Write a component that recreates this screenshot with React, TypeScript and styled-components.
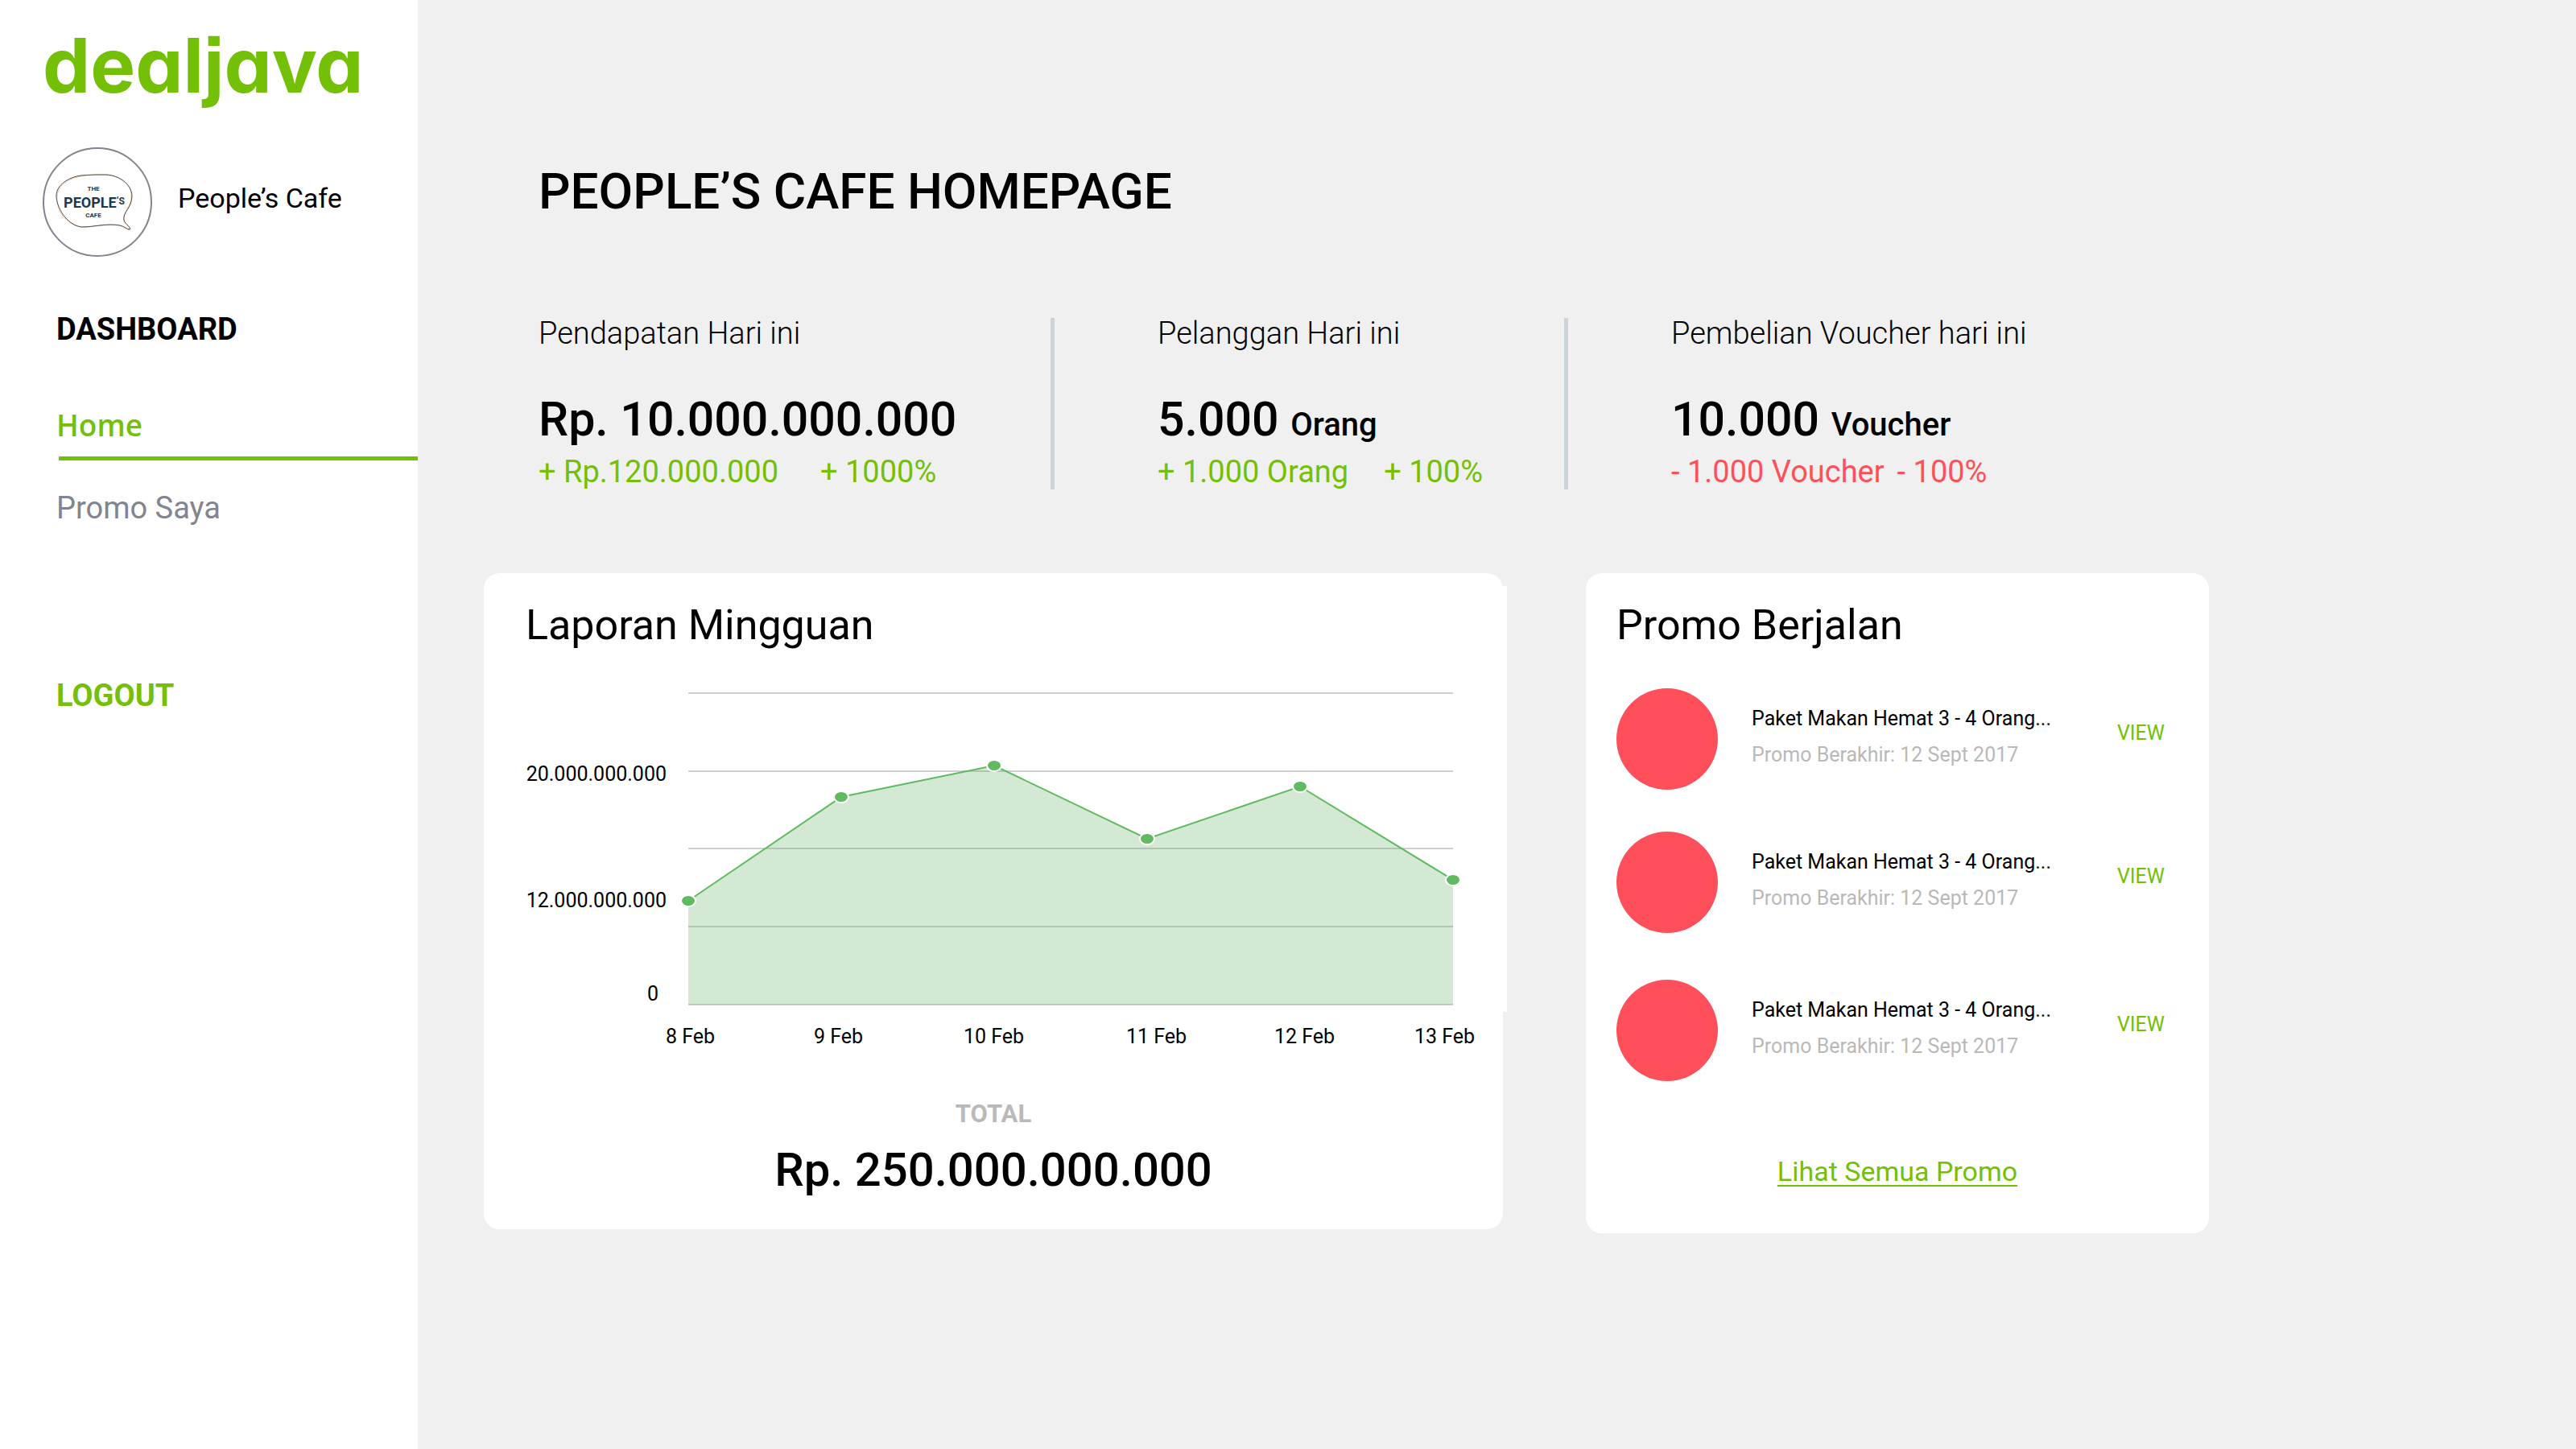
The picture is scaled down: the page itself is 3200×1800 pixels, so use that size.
import React from "react";
import styled, { createGlobalStyle } from "styled-components";

const color = {
  green: "#74c007",
  red: "#ff4f5a",
  ink: "#000000",
  slate: "#82858f",
  muted: "#b9b9b9",
  divider: "#cdd3dc",
  canvas: "#f0f0f0",
};

const GlobalStyle = createGlobalStyle`
  *, *::before, *::after { box-sizing: border-box; }
  body {
    margin: 0;
    background: ${color.canvas};
    color: ${color.ink};
    font-family: Roboto, "Liberation Sans", sans-serif;
  }
  h1, h2, p, ul, ol { margin: 0; padding: 0; font-weight: 400; }
  ul, ol { list-style: none; }
  a { color: inherit; text-decoration: none; }
  button { padding: 0; border: 0; background: none; font: inherit; color: inherit; cursor: pointer; }
`;

const Page = styled.div`
  display: flex;
  min-height: 100vh;
`;

/* Sidebar */

const Sidebar = styled.aside`
  flex: 0 0 519px;
  background: #fff;
  padding-top: 33px;
`;

const Wordmark = styled.a`
  display: block;
  padding-left: 53px;
  font-family: Inter, "Open Sans", sans-serif;
  font-weight: 700;
  font-size: 94px;
  line-height: 96px;
  font-feature-settings: "cv11" 1, "ss07" 1;
  color: ${color.green};
`;

const Merchant = styled.div`
  display: flex;
  align-items: center;
  gap: 32px;
  margin: 54px 0 70px;
  padding-left: 53px;
`;

const Avatar = styled.svg`
  display: block;
  width: 136px;
  height: 136px;
`;

const MerchantName = styled.p`
  padding-bottom: 10px;
  font-size: 34px;
  line-height: 40px;
`;

const Menu = styled.nav`
  display: flex;
  flex-direction: column;
  align-items: stretch;
  padding-left: 70px;
  font-size: 38px;
  line-height: 40px;
`;

const MenuTitle = styled.h2`
  margin-bottom: 79px;
  font-size: 38px;
  font-weight: 700;
`;

const MenuList = styled.ul`
  display: flex;
  flex-direction: column;
  gap: 39px;
  margin-bottom: 193px;
`;

const MenuLink = styled.a<{ $active?: boolean }>`
  display: block;
  color: ${(p) => (p.$active ? color.green : color.slate)};
  ${(p) =>
    p.$active &&
    `
    font-family: "Open Sans", Roboto, sans-serif;
    font-size: 37px;
    font-weight: 600;
    &::after {
      content: "";
      display: block;
      height: 5px;
      margin: 19px 0 0 3px;
      background: ${color.green};
    }
  `}
`;

const Logout = styled.button`
  align-self: flex-start;
  font-weight: 700;
  color: ${color.green};
`;

/* Main area */

const Main = styled.main`
  flex: 1;
  min-width: 0;
  padding: 206px 456px 60px 82px;
`;

const PageTitle = styled.h1`
  padding-left: 68px;
  font-size: 62px;
  line-height: 64px;
  font-weight: 500;
`;

const Stats = styled.section`
  display: grid;
  grid-template-columns: 709fr 638fr 796fr;
  margin: 125px 0 104px;
`;

const Stat = styled.div`
  padding: 0 0 3px 128px;
  border-right: 5px solid ${color.divider};
  white-space: nowrap;
  &:first-child { padding-left: 68px; }
  &:last-child { border-right: 0; }
`;

const StatLabel = styled.p`
  font-size: 38px;
  line-height: 38px;
  font-weight: 300;
`;

const StatValue = styled.p`
  margin: 58px 0 16px;
  font-size: 59px;
  line-height: 60px;
  font-weight: 500;
`;

const Unit = styled.span`
  font-size: 40px;
  line-height: 40px;
`;

const StatDelta = styled.p<{ $down?: boolean; $gap: number }>`
  display: flex;
  gap: ${(p) => p.$gap}px;
  font-size: 38px;
  line-height: 38px;
  color: ${(p) => (p.$down ? color.red : color.green)};
`;

const Cards = styled.div`
  display: grid;
  grid-template-columns: 1266fr 774fr;
  column-gap: 103px;
  align-items: start;
`;

const Card = styled.section`
  min-width: 0;
  border-radius: 20px;
  background: #fff;
`;

const CardTitle = styled.h2`
  font-size: 52px;
  line-height: 60px;
`;

/* Weekly report */

const ReportCard = styled(Card)`
  padding: 16px 0 44px;
`;

const ChartPanel = styled.div`
  margin-right: -5px;
  padding: 19px 67px 7px 52px;
  background: #fff;
`;

const ChartRow = styled.div`
  display: grid;
  grid-template-columns: 202px 1fr;
  align-items: start;
  margin-top: 54px;
`;

const ValueAxis = styled.ol`
  display: grid;
  grid-template-rows: 157px 116px 30px;
  padding: 86px 27px 0 0;
  font-size: 25px;
  line-height: 30px;
  text-align: right;
  & > li:last-child { padding-right: 10px; }
`;

const Plot = styled.svg`
  display: block;
  width: 100%;
  overflow: visible;
`;

const DateAxis = styled.ol`
  display: grid;
  grid-template-columns: 184fr 186fr 202fr 184fr 174fr 76fr;
  padding: 16px 34px 0 226px;
  font-size: 25px;
  line-height: 30px;
  white-space: nowrap;
`;

const TotalLabel = styled.p`
  margin-top: 63px;
  font-size: 31px;
  line-height: 36px;
  font-weight: 700;
  text-align: center;
  color: ${color.muted};
`;

const TotalValue = styled.p`
  margin-top: 21px;
  font-size: 58px;
  line-height: 60px;
  font-weight: 500;
  text-align: center;
`;

/* Running promos */

const PromoCard = styled(Card)`
  display: flex;
  flex-direction: column;
  padding: 35px 55px 57px 38px;
`;

const PromoList = styled.ul`
  display: flex;
  flex-direction: column;
  gap: 52px;
  margin: 48px 0 92px;
  & > li:last-child { padding-top: 6px; }
`;

const PromoItem = styled.li`
  display: flex;
  align-items: flex-start;
`;

const PromoImage = styled.div`
  flex: 0 0 126px;
  height: 126px;
  border-radius: 50%;
  background: ${color.red};
`;

const PromoText = styled.div`
  flex: 1;
  display: flex;
  flex-direction: column;
  gap: 15px;
  padding: 23px 0 0 42px;
  font-size: 25px;
  line-height: 30px;
`;

const PromoEnd = styled.p`
  color: ${color.muted};
`;

const ViewLink = styled.a`
  padding-top: 41px;
  font-size: 25px;
  line-height: 30px;
  color: ${color.green};
`;

const AllPromos = styled.a`
  align-self: center;
  margin-left: 17px;
  font-size: 34px;
  line-height: 40px;
  color: ${color.green};
  text-decoration: underline 2px;
  text-underline-offset: 5px;
  text-decoration-skip-ink: none;
`;

const stats = [
  { label: "Pendapatan Hari ini", value: "Rp. 10.000.000.000", unit: "", change: "+ Rp.120.000.000", percent: "+ 1000%", gap: 52, down: false },
  { label: "Pelanggan Hari ini", value: "5.000", unit: "Orang", change: "+ 1.000 Orang", percent: "+ 100%", gap: 44, down: false },
  { label: "Pembelian Voucher hari ini", value: "10.000", unit: "Voucher", change: "- 1.000 Voucher", percent: "- 100%", gap: 16, down: true },
];

const points = [
  [0, 258],
  [190, 129],
  [380, 90],
  [570, 181],
  [760, 116],
  [950, 232],
];
const line = points.map((p) => p.join(",")).join(" ");

const dates = ["8 Feb", "9 Feb", "10 Feb", "11 Feb", "12 Feb", "13 Feb"];
const values = ["20.000.000.000", "12.000.000.000", "0"];
const promos = [1, 2, 3].map((id) => ({
  id,
  name: "Paket Makan Hemat 3 - 4 Orang...",
  end: "Promo Berakhir: 12 Sept 2017",
}));

function CafeLogo() {
  return (
    <Avatar viewBox="0 0 136 136" role="img" aria-label="The People's Cafe">
      <circle cx="68" cy="68" r="67" fill="#fff" stroke={color.slate} strokeWidth="2" />
      <path
        d="M48 36C32 38 18 49 18 60C16 77 27 92 41 97C56 103 68 94 96 97C101 99 105 103 109 103C111 100 103 97 101 91C99 80 111 74 110 59C110 45 97 36 82 35C70 33 58 34 48 36Z"
        fill="none"
        stroke="#efc9a2"
        strokeWidth="1"
      />
      <path
        d="M48 35C32 37 17 47 17 60C17 74 29 96 48 99C64 99 80 94 96 97C101 98 105 102 108 102C110 99 103 96 101 91C99 80 111 76 111 60C110 45 94 35 80 34C70 34 58 34 48 35Z"
        fill="none"
        stroke="#4a4a4e"
        strokeWidth="1"
      />
      <g fill="#22384a" fontWeight="700" textAnchor="middle" fontFamily="Roboto, sans-serif">
        <text x="63" y="54" fontSize="8">THE</text>
        <text x="64" y="75" fontSize="18">
          PEOPLE<tspan fontSize="12" dy="-4">’S</tspan>
        </text>
        <text x="63" y="87" fontSize="8">CAFE</text>
      </g>
    </Avatar>
  );
}

function WeeklyChart() {
  return (
    <Plot viewBox="0 0 950 387" role="img" aria-label="Laporan Mingguan">
      {[0, 97, 193, 290, 387].map((y) => (
        <line key={y} x1="0" x2="950" y1={y} y2={y} stroke="#cfcfcf" strokeWidth="2" />
      ))}
      <polygon points={`0,387 ${line} 950,387`} fill="#50a850" fillOpacity="0.25" />
      <polyline points={line} fill="none" stroke="#60ba60" strokeWidth="2" />
      {points.map(([x, y]) => (
        <ellipse key={x} cx={x} cy={y} rx="9" ry="7" fill="#60ba60" stroke="#fff" strokeWidth="2" />
      ))}
    </Plot>
  );
}

export default function App() {
  return (
    <>
      <GlobalStyle />
      <Page>
        <Sidebar>
          <Wordmark href="#">dealjava</Wordmark>
          <Merchant>
            <CafeLogo />
            <MerchantName>People’s Cafe</MerchantName>
          </Merchant>
          <Menu>
            <MenuTitle>DASHBOARD</MenuTitle>
            <MenuList>
              <li><MenuLink href="#home" $active>Home</MenuLink></li>
              <li><MenuLink href="#promo">Promo Saya</MenuLink></li>
            </MenuList>
            <Logout type="button">LOGOUT</Logout>
          </Menu>
        </Sidebar>
        <Main>
          <PageTitle>PEOPLE’S CAFE HOMEPAGE</PageTitle>
          <Stats>
            {stats.map((s) => (
              <Stat key={s.label}>
                <StatLabel>{s.label}</StatLabel>
                <StatValue>
                  {s.value}
                  {s.unit && <> <Unit>{s.unit}</Unit></>}
                </StatValue>
                <StatDelta $gap={s.gap} $down={s.down}>
                  <span>{s.change}</span>
                  <span>{s.percent}</span>
                </StatDelta>
              </Stat>
            ))}
          </Stats>
          <Cards>
            <ReportCard>
              <ChartPanel>
                <CardTitle>Laporan Mingguan</CardTitle>
                <ChartRow>
                  <ValueAxis>
                    {values.map((v) => <li key={v}>{v}</li>)}
                  </ValueAxis>
                  <WeeklyChart />
                </ChartRow>
              </ChartPanel>
              <DateAxis>
                {dates.map((d) => <li key={d}>{d}</li>)}
              </DateAxis>
              <TotalLabel>TOTAL</TotalLabel>
              <TotalValue>Rp. 250.000.000.000</TotalValue>
            </ReportCard>
            <PromoCard>
              <CardTitle>Promo Berjalan</CardTitle>
              <PromoList>
                {promos.map((p) => (
                  <PromoItem key={p.id}>
                    <PromoImage />
                    <PromoText>
                      <p>{p.name}</p>
                      <PromoEnd>{p.end}</PromoEnd>
                    </PromoText>
                    <ViewLink href="#promo">VIEW</ViewLink>
                  </PromoItem>
                ))}
              </PromoList>
              <AllPromos href="#promo">Lihat Semua Promo</AllPromos>
            </PromoCard>
          </Cards>
        </Main>
      </Page>
    </>
  );
}
